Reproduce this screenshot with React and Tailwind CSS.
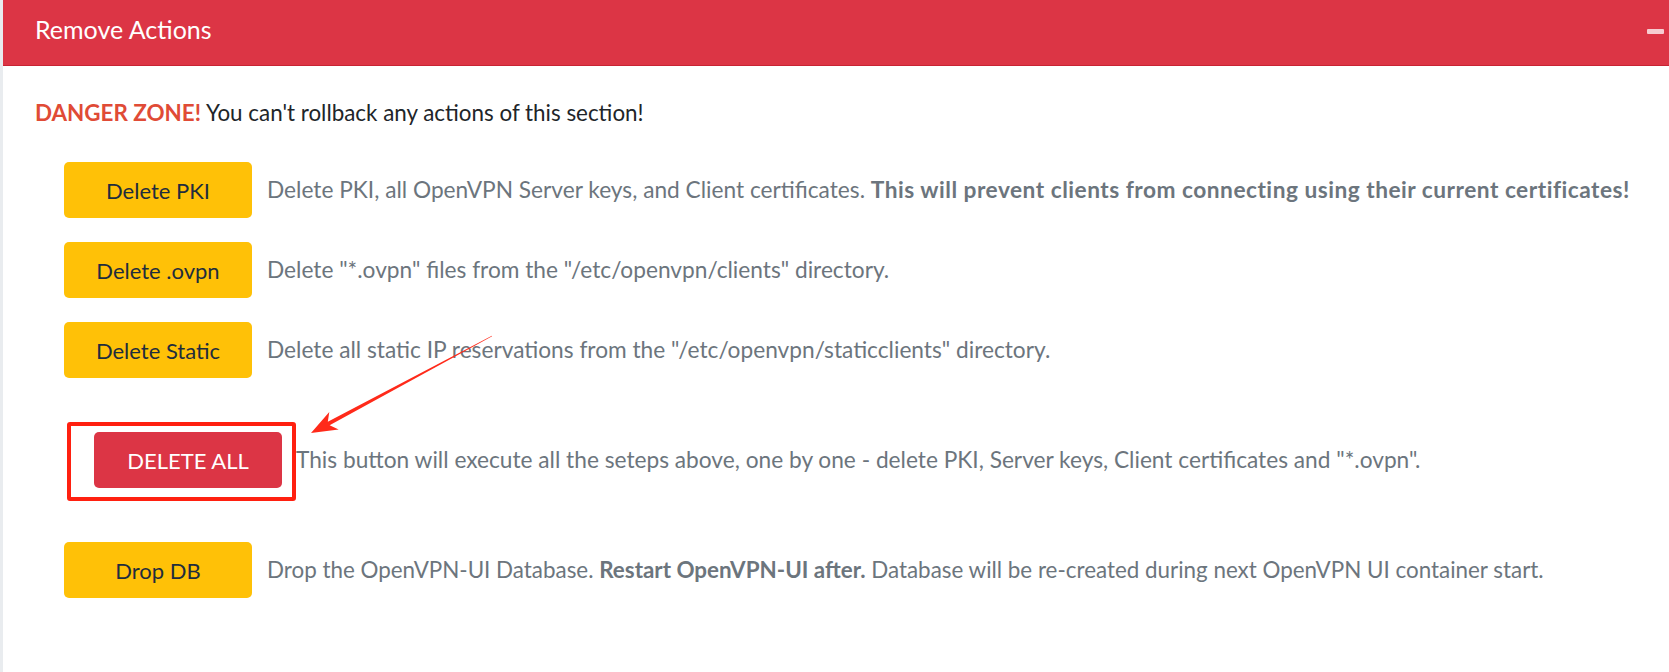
const rows = [
  {
    label: 'Delete PKI',
    text: 'Delete PKI, all OpenVPN Server keys, and Client certificates. ',
    bold: 'This will prevent clients from connecting using their current certificates!',
  },
  { label: 'Delete .ovpn', text: 'Delete "*.ovpn" files from the "/etc/openvpn/clients" directory.' },
  { label: 'Delete Static', text: 'Delete all static IP reservations from the "/etc/openvpn/staticclients" directory.' },
]

const YellowButton = ({ children }) => (
  <button className="w-[188px] h-[56px] shrink-0 rounded-[5px] bg-[#ffc107] text-[#1f2d3d] text-[22px]">
    {children}
  </button>
)

const Arrow = () => (
  <svg className="absolute left-0 top-0 pointer-events-none" width="1669" height="672">
    <polygon
      points="491.9,335.7 327.8,421.7 329.3,411.9 311,433 338.7,429.5 329.6,425.3 492.1,336.3"
      fill="#ff2a1a"
    />
  </svg>
)

const App = () => {
  return (
    <div className="relative flex min-h-[672px] bg-white font-['Lato',sans-serif]">
      <div className="w-[3px] bg-[#e9ecef]" />
      <div className="flex-1">
        <div className="h-[66px] bg-[#dc3545] border-b border-[#c82333] flex items-center justify-between pl-[32px] pr-[5px]">
          <h3 className="text-white text-[25px] -mt-[6px]">Remove Actions</h3>
          <div className="w-[17px] h-[5px] bg-white/75 rounded-[1px] -mt-[3px]" />
        </div>

        <div className="pt-[32px] pl-[32px]">
          <p className="text-[22.4px] leading-[30px] text-[#212529]">
            <span className="font-bold text-[#e04b36]">DANGER ZONE!</span> You can't rollback any actions of this section!
          </p>

          <div className="mt-[34px] ml-[29px] flex flex-col gap-[24px]">
            {rows.map((r) => (
              <div key={r.label} className="flex items-center gap-[15px]">
                <YellowButton>{r.label}</YellowButton>
                <p className="text-[22.7px] text-[#6c757d] whitespace-nowrap">
                  {r.text}
                  {r.bold && <b className="tracking-[0.5px]">{r.bold}</b>}
                </p>
              </div>
            ))}
          </div>

          <div className="mt-[54px] ml-[59px] flex items-center gap-[14px]">
            <div className="relative">
              <button className="w-[188px] h-[56px] rounded-[5px] bg-[#dc3545] text-white text-[22px]">DELETE ALL</button>
              <div className="absolute -left-[27px] -top-[10px] w-[229px] h-[79px] border-[4px] border-[#ff2010] rounded-[3px]" />
            </div>
            <p className="text-[22.7px] text-[#6c757d] whitespace-nowrap">
              This button will execute all the seteps above, one by one - delete PKI, Server keys, Client certificates and "*.ovpn".
            </p>
          </div>

          <div className="mt-[54px] ml-[29px] flex items-center gap-[15px]">
            <YellowButton>Drop DB</YellowButton>
            <p className="text-[22.4px] text-[#6c757d] whitespace-nowrap">
              Drop the OpenVPN-UI Database. <b>Restart OpenVPN-UI after.</b> Database will be re-created during next OpenVPN UI container start.
            </p>
          </div>
        </div>
      </div>
      <Arrow />
    </div>
  )
}

export default App
